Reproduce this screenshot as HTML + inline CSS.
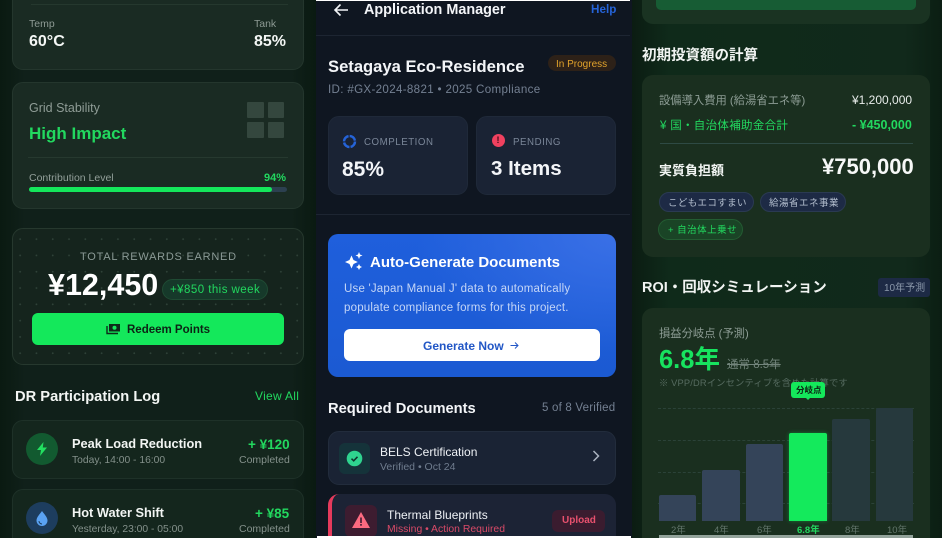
<!DOCTYPE html>
<html lang="en"><head><meta charset="utf-8"><style>
html,body{margin:0;padding:0;width:942px;height:538px;overflow:hidden;background:#0c1a12}
body{position:relative;font-family:"Liberation Sans","Noto Sans CJK JP",sans-serif;color:#fff}
.a,.t{position:absolute}
.t{white-space:nowrap;line-height:1}
.b{font-weight:700}
.card{position:absolute;box-sizing:border-box;border-radius:11px}
.g{background:#1a2b23;border:1px solid #24362d}
.r{background:#1a2f1f}
.bar{position:absolute;bottom:0;border-radius:2px 2px 0 0}
.dash{position:absolute;left:658px;width:256px;border-top:1px dashed #2b4238}
</style></head><body>

<!-- LEFT PANEL -->
<div class="a" style="left:0;top:0;width:316px;height:538px;background:linear-gradient(90deg,#0a1a11 0,#10201a 8%,#10201a 92%,#0a1a11 100%)"></div>
<div class="card g" style="left:12px;top:-30px;width:292px;height:100px"></div>
<div class="a" style="left:31px;top:4px;width:257px;height:1px;background:#25382e"></div>
<div class="t" style="left:29px;top:19px;font-size:10.5px;color:#8d9a94">Temp</div>
<div class="t" style="left:29px;top:34px;font-size:16px;font-weight:700;color:#f4f7f5">60°C</div>
<div class="t" style="left:254px;top:19px;font-size:10.5px;color:#8d9a94">Tank</div>
<div class="t" style="left:254px;top:34px;font-size:16px;font-weight:700;color:#f4f7f5">85%</div>

<div class="card g" style="left:12px;top:82px;width:292px;height:127px"></div>
<div class="t" style="left:29px;top:102px;font-size:12.5px;color:#8f9c96">Grid Stability</div>
<div class="t b" style="left:29px;top:125px;font-size:17px;color:#22d85f">High Impact</div>
<div class="a" style="left:247px;top:102px;width:17px;height:16px;background:#34473e;border-radius:1px"></div>
<div class="a" style="left:268px;top:102px;width:16px;height:16px;background:#34473e;border-radius:1px"></div>
<div class="a" style="left:247px;top:122px;width:17px;height:16px;background:#34473e;border-radius:1px"></div>
<div class="a" style="left:268px;top:122px;width:16px;height:16px;background:#34473e;border-radius:1px"></div>
<div class="a" style="left:28px;top:157px;width:260px;height:1px;background:#26392f"></div>
<div class="t" style="left:29px;top:173px;font-size:10.5px;color:#929f99">Contribution Level</div>
<div class="t b" style="left:264px;top:173px;font-size:11px;color:#22d85f">94%</div>
<div class="a" style="left:29px;top:187px;width:258px;height:5px;background:#2c4050;border-radius:3px"></div>
<div class="a" style="left:29px;top:187px;width:243px;height:5px;background:#14e75b;border-radius:3px"></div>

<div class="card" style="left:12px;top:228px;width:292px;height:137px;background-color:#15241d;border:1px solid #26382e;background-image:radial-gradient(#2f4238 .8px,transparent 1.1px);background-size:16.3px 16.3px;background-position:-1px 2px"></div>
<div class="t" style="left:80px;top:252px;font-size:11px;letter-spacing:.75px;color:#8b9a96">TOTAL REWARDS EARNED</div>
<div class="t b" style="left:48px;top:270px;font-size:30.5px;color:#fff">¥12,450</div>
<div class="a" style="left:162px;top:279px;width:106px;height:21px;box-sizing:border-box;background:#16392a;border:1px solid #1f4a33;border-radius:11px"></div>
<div class="t" style="left:170px;top:285px;font-size:11.5px;letter-spacing:.45px;color:#22d85f">+¥850 this week</div>
<div class="a" style="left:32px;top:313px;width:252px;height:32px;background:#14e85b;border-radius:6px"></div>
<svg class="a" style="left:106px;top:323px" width="14" height="12" viewBox="0 0 14 12"><path d="M1 3v7.5h11" fill="none" stroke="#0e2a1a" stroke-width="1.4"/><rect x="3" y="1" width="11" height="7.5" fill="#0e2a1a"/><circle cx="8.5" cy="4.7" r="2" fill="#14e85b"/></svg>
<div class="t b" style="left:127px;top:325px;font-size:11.5px;color:#0c2415">Redeem Points</div>

<div class="t b" style="left:15px;top:390px;font-size:14.7px;color:#f3f6f4">DR Participation Log</div>
<div class="t" style="left:255px;top:390px;font-size:12px;letter-spacing:.3px;color:#22d85f">View All</div>

<div class="card" style="left:12px;top:420px;width:292px;height:59px;background:#14261d;border:1px solid #1e3128"></div>
<div class="a" style="left:26px;top:433px;width:32px;height:32px;border-radius:50%;background:#125a30"></div>
<svg class="a" style="left:36px;top:442px" width="12" height="14" viewBox="0 0 12 14"><path d="M7.5 0 1 8h4l-1 6 7-8.500H6.800z" fill="#22e060"/></svg>
<div class="t b" style="left:72px;top:438px;font-size:12.8px;color:#f2f5f3">Peak Load Reduction</div>
<div class="t" style="left:72px;top:456px;font-size:10.3px;color:#84918b">Today, 14:00 - 16:00</div>
<div class="t b" style="left:248px;top:438px;font-size:13.5px;color:#22d85f">+ ¥120</div>
<div class="t" style="left:239px;top:455px;font-size:10.5px;color:#84918b">Completed</div>

<div class="card" style="left:12px;top:489px;width:292px;height:70px;background:#14261d;border:1px solid #1e3128"></div>
<div class="a" style="left:26px;top:502px;width:32px;height:32px;border-radius:50%;background:#1d3d5e"></div>
<svg class="a" style="left:36px;top:511px" width="12" height="15" viewBox="0 0 12 15"><path d="M6 0C4 3 .5 6 .5 9.500a5.500 5.500 0 0 0 11 0C11.500 6 8 3 6 0z" fill="#5aa2f2"/><path d="M3 10a3 3 0 0 0 3 3" fill="none" stroke="#1d3d5e" stroke-width="1"/></svg>
<div class="t b" style="left:72px;top:507px;font-size:12.8px;color:#f2f5f3">Hot Water Shift</div>
<div class="t" style="left:72px;top:525px;font-size:10.3px;color:#84918b">Yesterday, 23:00 - 05:00</div>
<div class="t b" style="left:255px;top:507px;font-size:13.5px;color:#22d85f">+ ¥85</div>
<div class="t" style="left:239px;top:524px;font-size:10.5px;color:#84918b">Completed</div>

<!-- MIDDLE PANEL -->
<div class="a" style="left:316px;top:0;width:316px;height:538px;background:#0f1621"></div>
<svg class="a" style="left:333px;top:3px" width="16" height="14" viewBox="0 0 16 14"><path d="M15 7H2M7.500 1.500 2 7l5.500 5.500" fill="none" stroke="#f2f4f7" stroke-width="1.600"/></svg>
<div class="t b" style="left:364px;top:3px;font-size:14.4px;color:#f3f5f8">Application Manager</div>
<div class="t" style="left:591px;top:4px;font-size:11.7px;font-weight:700;color:#2563d8">Help</div>
<div class="a" style="left:316px;top:35px;width:314px;height:1px;background:#1d2532"></div>

<div class="t b" style="left:328px;top:59px;font-size:16.6px;color:#f3f5f8">Setagaya Eco-Residence</div>
<div class="a" style="left:548px;top:55px;width:68px;height:16px;background:#2d2118;border-radius:8px"></div>
<div class="t" style="left:556px;top:60px;font-size:10px;color:#e2a32b">In Progress</div>
<div class="t" style="left:328px;top:84px;font-size:11.6px;letter-spacing:.32px;color:#748092">ID: #GX-2024-8821 • 2025 Compliance</div>

<div class="card" style="left:328px;top:116px;width:140px;height:79px;background:#1a2334;border:1px solid #1f2939"></div>
<div class="card" style="left:476px;top:116px;width:140px;height:79px;background:#1a2334;border:1px solid #1f2939"></div>
<svg class="a" style="left:342px;top:134px" width="15" height="15" viewBox="0 0 15 15"><circle cx="7.500" cy="7.500" r="5.500" fill="none" stroke="#2563d8" stroke-width="2.500" stroke-dasharray="7.500 1.140"/></svg>
<div class="t" style="left:364px;top:138px;font-size:9.7px;letter-spacing:.55px;color:#7a8698">COMPLETION</div>
<div class="t b" style="left:342px;top:159px;font-size:21px;color:#f3f5f8">85%</div>
<div class="a" style="left:492px;top:134px;width:13px;height:13px;border-radius:50%;background:#f0415f"></div>
<div class="t b" style="left:496.500px;top:136px;font-size:9px;color:#3a0c18">!</div>
<div class="t" style="left:513px;top:138px;font-size:9.7px;letter-spacing:.55px;color:#7a8698">PENDING</div>
<div class="t b" style="left:491px;top:159px;font-size:20.5px;color:#f3f5f8">3 Items</div>
<div class="a" style="left:316px;top:214px;width:314px;height:1px;background:#1d2532"></div>

<div class="card" style="left:328px;top:234px;width:288px;height:143px;border-radius:10px;background:radial-gradient(ellipse 200px 120px at 100% 0,#3a70e6 0,rgba(58,112,230,0) 100%),linear-gradient(180deg,#1f5fdc,#1b5ad2)"></div>
<svg class="a" style="left:344px;top:252px" width="20" height="19" viewBox="0 0 20 19"><g fill="#fff"><path d="M7.500 3.500 9.500 8l4.300 2-4.300 2-2 4.500-2-4.500L1 10l4.500-2z"/><path d="M15 0l1 2.500 2.500 1-2.500 1-1 2.500-1-2.500-2.500-1 2.500-1z"/><path d="M15 12l1 2 2 1-2 1-1 2-1-2-2-1 2-1z"/></g></svg>
<div class="t b" style="left:370px;top:255px;font-size:15px;color:#fff">Auto-Generate Documents</div>
<div class="t" style="left:344px;top:284px;font-size:11.500px;letter-spacing:.2px;color:#c5d6f7">Use 'Japan Manual J' data to automatically</div>
<div class="t" style="left:344px;top:303px;font-size:11.500px;letter-spacing:.2px;color:#c5d6f7">populate compliance forms for this project.</div>
<div class="a" style="left:344px;top:329px;width:256px;height:32px;background:#fff;border-radius:6px"></div>
<div class="t b" style="left:423px;top:340px;font-size:12px;color:#2257c6">Generate Now</div>
<svg class="a" style="left:510px;top:341px" width="9" height="9" viewBox="0 0 9 9"><path d="M.5 4.500h7M5 1.500l3 3-3 3" fill="none" stroke="#2257c6" stroke-width="1"/></svg>

<div class="t b" style="left:328px;top:402px;font-size:14.700px;color:#f3f5f8">Required Documents</div>
<div class="t" style="left:542px;top:403px;font-size:11.500px;letter-spacing:.2px;color:#748092">5 of 8 Verified</div>

<div class="card" style="left:328px;top:431px;width:288px;height:54px;background:#1a2334;border:1px solid #222c3c"></div>
<div class="a" style="left:339px;top:443px;width:31px;height:31px;border-radius:6px;background:#15333a"></div>
<svg class="a" style="left:346px;top:450px" width="17" height="17" viewBox="0 0 17 17"><circle cx="8.500" cy="8.500" r="7.800" fill="#2fd38f"/><path d="M5.500 8.700l2.200 2.100 3.800-4" fill="none" stroke="#10302c" stroke-width="1.500"/></svg>
<div class="t" style="left:380px;top:446px;font-size:12px;color:#eef1f5">BELS Certification</div>
<div class="t" style="left:380px;top:462px;font-size:10.500px;color:#6f7c8e">Verified • Oct 24</div>
<svg class="a" style="left:592px;top:450px" width="8" height="12" viewBox="0 0 8 12"><path d="M1.500 1 6.500 6l-5 5" fill="none" stroke="#a9b2bf" stroke-width="1.500"/></svg>

<div class="card" style="left:328px;top:494px;width:288px;height:70px;background:#1c2335;border-left:4px solid #e53a5c"></div>
<div class="a" style="left:345px;top:505px;width:32px;height:32px;border-radius:6px;background:#3d1c30"></div>
<svg class="a" style="left:352px;top:512px" width="18" height="16" viewBox="0 0 18 16"><path d="M9 0 18 16H0z" fill="#fb6a80"/><rect x="8.200" y="5.500" width="1.600" height="5.500" fill="#3d1c30"/><rect x="8.200" y="12" width="1.600" height="1.700" fill="#3d1c30"/></svg>
<div class="t" style="left:387px;top:509px;font-size:12px;color:#eef1f5">Thermal Blueprints</div>
<div class="t" style="left:387px;top:525px;font-size:10.400px;color:#d94a68">Missing • Action Required</div>
<div class="a" style="left:552px;top:510px;width:53px;height:22px;background:#3a1c2f;border-radius:6px"></div>
<div class="t b" style="left:562px;top:516px;font-size:10px;color:#e8516e">Upload</div>
<div class="a" style="left:316px;top:0;width:314px;height:1px;background:#fff"></div>
<div class="a" style="left:317px;top:536px;width:314px;height:2px;background:#fff"></div>

<!-- RIGHT PANEL -->
<div class="a" style="left:632px;top:0;width:310px;height:538px;background:linear-gradient(90deg,#0b1c12 0,#0f2a1a 12%,#11291b 88%,#0b1e13 100%)"></div>
<div class="card" style="left:642px;top:-30px;width:288px;height:54px;background:#1a3322"></div>
<div class="a" style="left:656px;top:0;width:260px;height:10px;background:#175c34;border-radius:0 0 5px 5px"></div>
<div class="t b" style="left:642px;top:49px;font-size:14.500px;color:#f1f4f2">初期投資額の計算</div>

<div class="card r" style="left:642px;top:75px;width:288px;height:182px"></div>
<div class="t" style="left:659px;top:96px;font-size:11.300px;color:#8d9d95">設備導入費用 (給湯省エネ等)</div>
<div class="t" style="left:852px;top:94px;font-size:12px;color:#e8ecea">¥1,200,000</div>
<div class="t" style="left:660px;top:121px;font-size:11.500px;letter-spacing:.3px;color:#22d85f">¥ 国・自治体補助金合計</div>
<div class="t b" style="left:852px;top:119px;font-size:12.500px;color:#22d85f">- ¥450,000</div>
<div class="a" style="left:660px;top:143px;width:253px;height:1px;background:#2e4a44"></div>
<div class="t b" style="left:659px;top:164px;font-size:13px;color:#f2f5f3">実質負担額</div>
<div class="t b" style="left:822px;top:156px;font-size:22px;color:#f6f8f7">¥750,000</div>
<div class="a" style="left:659px;top:192px;width:95px;height:20px;box-sizing:border-box;background:#1d2a45;border:1px solid #2a3a52;border-radius:10px"></div>
<div class="t" style="left:668px;top:199px;font-size:9.500px;letter-spacing:.35px;color:#b5c0d0">こどもエコすまい</div>
<div class="a" style="left:760px;top:192px;width:86px;height:20px;box-sizing:border-box;background:#1d2a45;border:1px solid #2a3a52;border-radius:10px"></div>
<div class="t" style="left:769px;top:199px;font-size:9.500px;letter-spacing:.5px;color:#b5c0d0">給湯省エネ事業</div>
<div class="a" style="left:658px;top:219px;width:85px;height:21px;box-sizing:border-box;background:#1a4426;border:1px solid #235c32;border-radius:11px"></div>
<div class="t" style="left:668px;top:226px;font-size:9.500px;letter-spacing:.5px;color:#22d85f">+ 自治体上乗せ</div>

<div class="t b" style="left:642px;top:281px;font-size:14.500px;color:#f1f4f2">ROI・回収シミュレーション</div>
<div class="a" style="left:878px;top:278px;width:52px;height:19px;background:#1d2a45;border-radius:3px"></div>
<div class="t" style="left:884px;top:284px;font-size:10px;color:#8b98aa">10年予測</div>

<div class="card r" style="left:642px;top:308px;width:288px;height:250px"></div>
<div class="t" style="left:659px;top:329px;font-size:11.300px;color:#8d9d95">損益分岐点 (予測)</div>
<div class="t b" style="left:659px;top:348px;font-size:25.500px;color:#17e35f">6.8年</div>
<div class="t" style="left:727px;top:360px;font-size:11.500px;color:#73857c;text-decoration:line-through">通常 8.5年</div>
<div class="t" style="left:659px;top:379px;font-size:9.300px;letter-spacing:.15px;color:#566b60">※ VPP/DRインセンティブを含めた計算です</div>

<div class="dash" style="top:408px"></div>
<div class="dash" style="top:440px"></div>
<div class="dash" style="top:472px"></div>
<div class="dash" style="top:503px"></div>

<div class="a" style="left:791px;top:382px;width:34px;height:16px;background:#14e85b;border-radius:3px"></div>
<div class="a" style="left:805px;top:397px;width:0;height:0;border-left:3px solid transparent;border-right:3px solid transparent;border-top:3px solid #14e85b"></div>
<div class="t b" style="left:796px;top:386px;font-size:8.500px;color:#0c2415">分岐点</div>

<div class="a" style="left:632px;top:0;width:310px;height:521px">
  <div class="bar" style="left:27px;width:37px;height:26px;background:#344459"></div>
  <div class="bar" style="left:70px;width:38px;height:51px;background:#344459"></div>
  <div class="bar" style="left:114px;width:37px;height:77px;background:#344459"></div>
  <div class="bar" style="left:157px;width:38px;height:88px;background:#14ea5c;box-shadow:0 0 4px rgba(20,234,92,.4)"></div>
  <div class="bar" style="left:200px;width:38px;height:102px;background:#26393d"></div>
  <div class="bar" style="left:244px;width:37px;height:113px;background:#26393d"></div>
</div>

<div class="t" style="left:671px;top:526px;font-size:9.500px;color:#64776d">2年</div>
<div class="t" style="left:714px;top:526px;font-size:9.500px;color:#64776d">4年</div>
<div class="t" style="left:757px;top:526px;font-size:9.500px;color:#64776d">6年</div>
<div class="t b" style="left:797px;top:526px;font-size:9.500px;color:#22d85f">6.8年</div>
<div class="t" style="left:845px;top:526px;font-size:9.500px;color:#64776d">8年</div>
<div class="t" style="left:887px;top:526px;font-size:9.500px;color:#64776d">10年</div>
<div class="a" style="left:659px;top:535px;width:254px;height:3px;background:#93a39b"></div>

</body></html>
